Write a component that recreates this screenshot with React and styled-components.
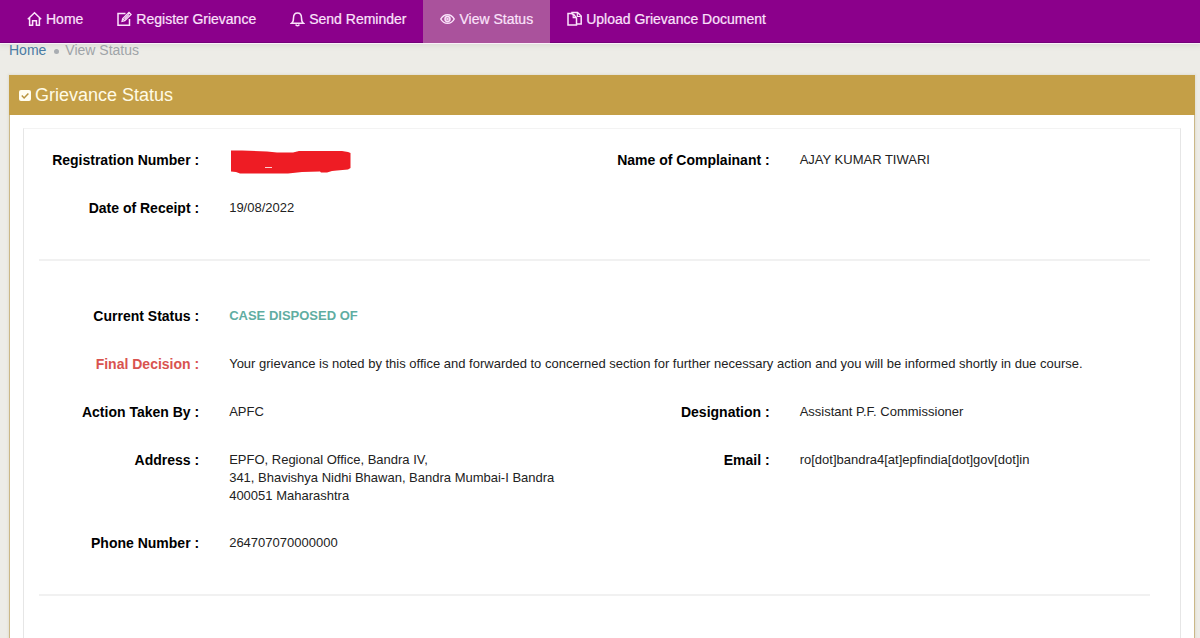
import React from "react";
import styled, { createGlobalStyle } from "styled-components";

const GlobalStyle = createGlobalStyle`
  *, *::before, *::after { box-sizing: border-box; }
  html, body { margin: 0; }
  body {
    background: #edece7;
    color: #222;
    font: 13px/18px "Liberation Sans", Arial, sans-serif;
  }
`;

const NavBar = styled.nav`
  display: flex;
  height: 43px;
  padding-left: 10px;
  background: #8b008b;
  box-shadow: inset 0 -1px #74007a, 0 1px #faf0fa, 0 2px 5px 1px #dcdcd8;
`;

const NavLink = styled.a`
  display: flex;
  align-items: center;
  gap: 4px;
  padding: 0 17px 5px;
  color: #fbe3fb;
  background: ${({ $active }) => ($active ? "#aa529c" : "transparent")};
  font-size: 14px;
  line-height: 20px;
  text-decoration: none;
  white-space: nowrap;
  -webkit-text-stroke: 0.2px;
`;

const NavIcon = styled.svg`
  flex: none;
  width: 15px;
  height: 16px;
  fill: none;
  stroke: currentColor;
  stroke-width: 1.5;
`;

const Breadcrumb = styled.div`
  display: flex;
  align-items: center;
  height: 32px;
  padding: 0 9px 18px;
  color: #9fa4a8;
  font-size: 14px;
  line-height: 14px;
`;

const CrumbLink = styled.a`
  color: #4a7ba3;
  text-decoration: none;
`;

const CrumbDot = styled.span`
  width: 5px;
  height: 5px;
  margin: 3px 6px 0 8px;
  border-radius: 50%;
  background: #a9adb2;
`;

const Panel = styled.main`
  margin: 0 5px 0 9px;
  border: 1px solid #cbb888;
  border-width: 0 1px;
  background: #fff;
  box-shadow: 0 0 2px 1px #e2dfd3;
`;

const PanelHeader = styled.header`
  display: flex;
  align-items: center;
  gap: 4px;
  height: 40px;
  margin: 0 -1px;
  padding: 0 10px 1px;
  background: #c49f47;
  color: #fffbe6;
`;

const PanelTitle = styled.h1`
  margin: 0;
  font-size: 18px;
  font-weight: 400;
  line-height: 20px;
`;

const CheckIcon = styled.svg`
  width: 12px;
  height: 12px;
  margin-top: 3px;
`;

const Card = styled.section`
  margin: 13px 13px 0;
  padding: 15px 15px 2px 0;
  border: 1px solid #e6e6e6;
  border-top-color: #f3f3f3;
  border-bottom: 0;
`;

const Row = styled.div`
  display: grid;
  grid-template-columns: 1fr 1fr;
`;

const Field = styled.div`
  display: grid;
  grid-template-columns: ${({ $wide }) => ($wide ? "1fr 5fr" : "1fr 2fr")};
  grid-column: ${({ $wide }) => ($wide ? "1 / -1" : "auto")};
  min-height: 32px;
  margin-bottom: 16px;
`;

const Label = styled.div`
  padding: 6px 15px 0;
  color: ${({ $alert }) => ($alert ? "#d9534f" : "#000")};
  font-size: 14px;
  font-weight: 700;
  line-height: 20px;
  text-align: right;
  white-space: nowrap;
`;

const Value = styled.div`
  padding: 7px 15px 6px;
  color: ${({ $status }) => ($status ? "#5fada2" : "#222")};
  font-weight: ${({ $status }) => ($status ? 700 : 400)};
`;

const Divider = styled.hr`
  height: 2px;
  margin: 19px 15px 39px;
  border: 0;
  background: #f1f1f1;

  &:last-child {
    margin-bottom: 40px;
  }
`;

const Redaction = styled.svg`
  display: block;
  width: 122px;
  height: 24px;
  margin: -1px 0 -13px;
`;

const HomeIcon = () => (
  <NavIcon viewBox="0 0 15 16">
    <path d="M.8 8.2 7.5 1.8l6.7 6.4M2.6 7v7.2h3V9.8h3.8v4.4h3V7" />
  </NavIcon>
);
const EditIcon = () => (
  <NavIcon viewBox="0 0 15 16">
    <path d="M8.5 2.5H1v11.7h11.5V8" />
    <path d="m5 10.5.7-3L12 1.3 14.2 3.5 7.8 9.800zM5.800 7.800l2 2M7.500 8l4.500-4.600" strokeWidth="1.2" />
  </NavIcon>
);
const BellIcon = () => (
  <NavIcon viewBox="0 0 15 16">
    <path d="M1.5 12.3c1.700-1.100 2-2.600 2-5.300 0-3.100 1.500-5 4-5s4 1.900 4 5c0 2.700.3 4.200 2 5.300zM5.800 13.500c.3 1.600 3.100 1.600 3.400 0" />
  </NavIcon>
);
const EyeIcon = () => (
  <NavIcon viewBox="0 0 15 16">
    <path d="M.8 8C3.800 2.300 11.200 2.300 14.200 8 11.200 13.700 3.800 13.700.8 8z" />
    <circle cx="7.5" cy="8" r="2.5" />
    <circle cx="7.5" cy="8" r=".5" />
  </NavIcon>
);
const DocsIcon = () => (
  <NavIcon viewBox="0 0 15 16">
    <path d="M4.500 2.500H1v11.500h8.500V7L7 3.800 4.500 2.500M5 2.500V1.500h5.500L14.200 5v8H9.500" />
    <path d="M6.200 3.500v3.200h3M10.300 2v3.500h3.500" strokeWidth="1.2" />
  </NavIcon>
);

const NAV = [
  ["Home", HomeIcon],
  ["Register Grievance", EditIcon],
  ["Send Reminder", BellIcon],
  ["View Status", EyeIcon],
  ["Upload Grievance Document", DocsIcon],
];

const Item = ({ label, children, wide, alert, status }) => (
  <Field $wide={wide}>
    <Label $alert={alert}>{label} :</Label>
    <Value $status={status}>{children}</Value>
  </Field>
);

export default function App() {
  return (
    <>
      <GlobalStyle />
      <NavBar>
        {NAV.map(([text, Icon]) => (
          <NavLink key={text} href="#" $active={text === "View Status"}>
            <Icon />
            {text}
          </NavLink>
        ))}
      </NavBar>
      <Breadcrumb>
        <CrumbLink href="#">Home</CrumbLink>
        <CrumbDot />
        <span>View Status</span>
      </Breadcrumb>
      <Panel>
        <PanelHeader>
          <CheckIcon viewBox="0 0 12 12">
            <rect x="0" y="0" width="12" height="11" rx="2" fill="#fffdf0" />
            <path d="m2.8 5.5 2.3 2.4 4.3-4.500" fill="none" stroke="#b8943f" strokeWidth="1.5" />
          </CheckIcon>
          <PanelTitle>Grievance Status</PanelTitle>
        </PanelHeader>
        <Card>
          <Row>
            <Item label="Registration Number">
              <Redaction viewBox="0 0 122 24">
                <path
                  fill="#ee1c24"
                  d="M2 .5 13 .5 38 1.500 48 2.500 64 2.500 70 1 113 1 119 2 121.500 3 121.500 18 119 19.500 108 20.500 103 21 98 22.500 92 22.500 91 21.500 73 22 59 23.500 11 23.500 7 22 2 21.500z"
                />
                <path d="M36 17.500h7" stroke="#fbd0d2" strokeWidth="1" />
              </Redaction>
            </Item>
            <Item label="Name of Complainant">AJAY KUMAR TIWARI</Item>
          </Row>
          <Row>
            <Item label="Date of Receipt">19/08/2022</Item>
          </Row>
          <Divider />
          <Row>
            <Item label="Current Status" status>CASE DISPOSED OF</Item>
          </Row>
          <Row>
            <Item label="Final Decision" wide alert>
              Your grievance is noted by this office and forwarded to concerned section for further
              necessary action and you will be informed shortly in due course.
            </Item>
          </Row>
          <Row>
            <Item label="Action Taken By">APFC</Item>
            <Item label="Designation">Assistant P.F. Commissioner</Item>
          </Row>
          <Row>
            <Item label="Address">
              EPFO, Regional Office, Bandra IV,
              <br />
              341, Bhavishya Nidhi Bhawan, Bandra Mumbai-I Bandra
              <br />
              400051 Maharashtra
            </Item>
            <Item label="Email">ro[dot]bandra4[at]epfindia[dot]gov[dot]in</Item>
          </Row>
          <Row>
            <Item label="Phone Number">264707070000000</Item>
          </Row>
          <Divider />
        </Card>
      </Panel>
    </>
  );
}
